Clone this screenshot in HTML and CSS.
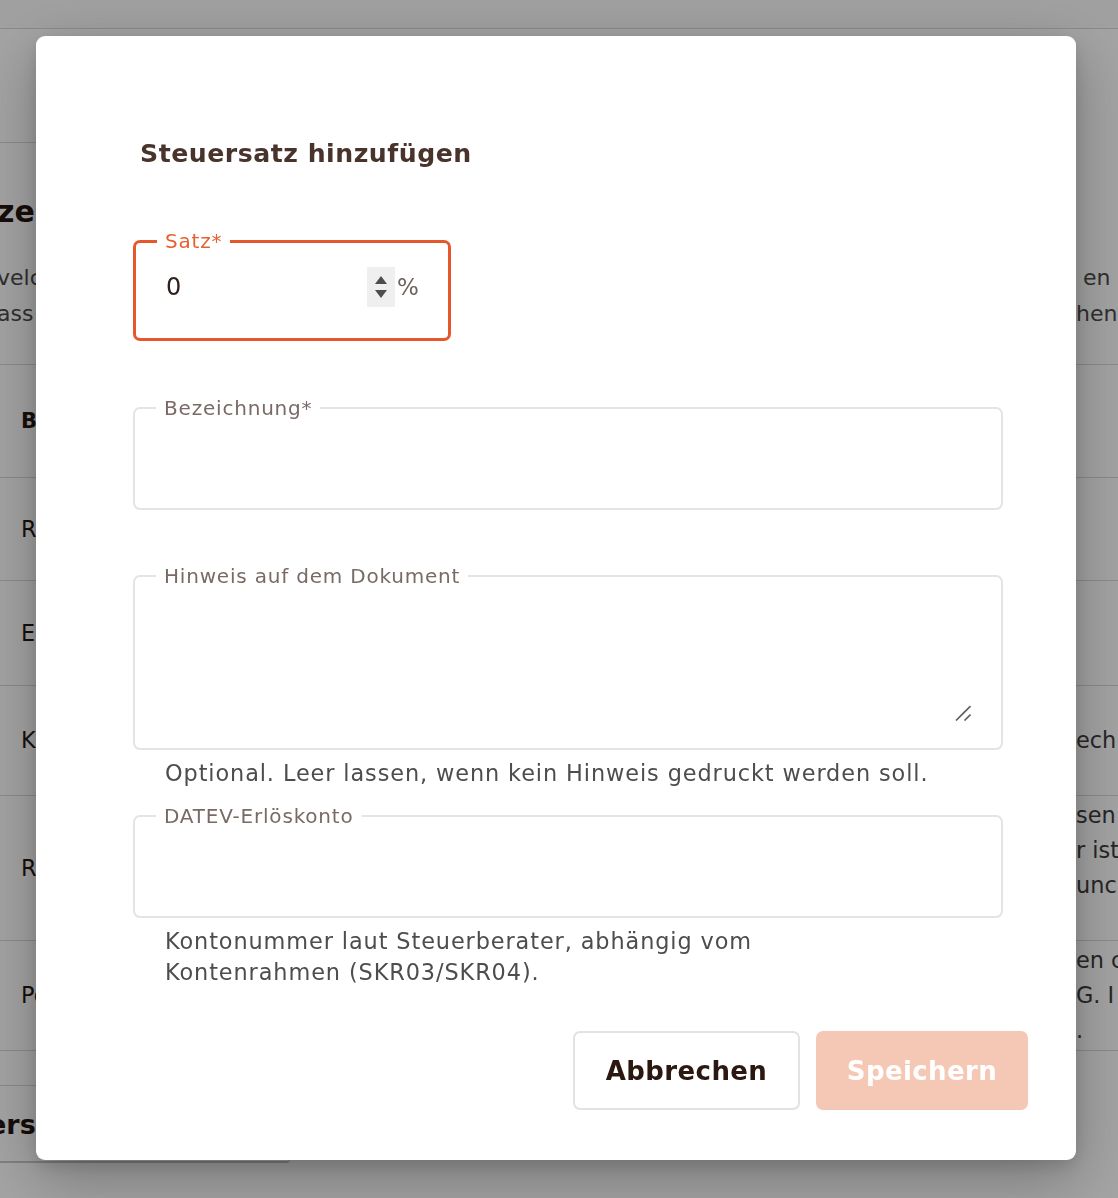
FILE: index.html
```html
<!DOCTYPE html>
<html lang="de">
<head>
<meta charset="utf-8">
<title>Steuersatz hinzufügen</title>
<link rel="stylesheet" href="styles.css">
</head>
<body>
<div class="page">
  <div class="topbar"></div>
  <div class="subbar"></div>
  <div class="row heading-row"><span class="l heading">zen</span></div>
  <div class="row para-row">
    <span class="l para">velche<br>ass</span>
    <span class="r para">&nbsp;en<br>hen</span>
  </div>
  <div class="table">
    <div class="trow th"><span class="l cell bold">Bezeichnung</span></div>
    <div class="trow r1"><span class="l cell">Regelsteuersatz</span></div>
    <div class="trow r2"><span class="l cell">Ermäßigt</span></div>
    <div class="trow r3"><span class="l cell">Kleinunternehmer</span><span class="r cell">ech</span></div>
    <div class="trow r4"><span class="l cell">Reverse Charge</span><span class="r cell top">sen<br>r ist<br>unc</span></div>
    <div class="trow r5"><span class="l cell">Portal</span><span class="r cell">en c<br>G. I<br>.</span></div>
  </div>
  <div class="section">
    <span class="l heading2">ers</span>
  </div>
  <div class="card-edge"></div>
</div>

<div class="overlay">
  <div class="modal" role="dialog" aria-labelledby="dlg-title">
    <h2 class="title" id="dlg-title">Steuersatz hinzufügen</h2>

    <fieldset class="field field-rate">
      <legend>Satz*</legend>
      <div class="rate-row">
        <input class="rate-input" type="text" value="0">
        <div class="spinner">
          <span class="tri up"></span>
          <span class="tri down"></span>
        </div>
        <span class="unit">%</span>
      </div>
    </fieldset>

    <fieldset class="field field-text">
      <legend>Bezeichnung*</legend>
      <input class="text-input" type="text">
    </fieldset>

    <fieldset class="field field-area">
      <legend>Hinweis auf dem Dokument</legend>
      <div class="area-wrap">
        <textarea class="area"></textarea>
        <svg class="grip" width="16" height="16" viewBox="0 0 16 16" aria-hidden="true">
          <path d="M1 15.5 L15.5 1 M9.5 15.5 L15.5 9.5" stroke="#5f5f5f" stroke-width="1.6" fill="none"/>
        </svg>
      </div>
    </fieldset>
    <p class="helper">Optional. Leer lassen, wenn kein Hinweis gedruckt werden soll.</p>

    <fieldset class="field field-text field-datev">
      <legend>DATEV-Erlöskonto</legend>
      <input class="text-input" type="text">
    </fieldset>
    <p class="helper helper-2">Kontonummer laut Steuerberater, abhängig vom Kontenrahmen (SKR03/SKR04).</p>

    <div class="actions">
      <button class="btn btn-cancel" type="button">Abbrechen</button>
      <button class="btn btn-save" type="button">Speichern</button>
    </div>
  </div>
</div>
</body>
</html>
```
FILE: styles.css
```css
* { box-sizing: border-box; }

html, body {
  margin: 0;
  padding: 0;
}

body {
  width: 1118px;
  height: 1198px;
  overflow: hidden;
  background: #ffffff;
  font-family: "DejaVu Sans", Inter, "Liberation Sans", sans-serif;
  color: #2a1c18;
}

/* ---------- background page ---------- */
.page {
  width: 1118px;
  height: 1198px;
  overflow: hidden;
}

.topbar {
  height: 29px;
  border-bottom: 1px solid #d8d8d8;
  background: #fbfbfb;
}

.subbar {
  height: 114px;
  width: 600px;
  border-bottom: 1px solid #d8d8d8;
}

.row {
  display: flex;
  justify-content: space-between;
  white-space: nowrap;
}

.l { margin-left: -3px; }
.r { width: 42px; overflow: hidden; }

.heading-row { margin-top: 49px; }
.heading {
  font-size: 30px;
  line-height: 40px;
  font-weight: 700;
  color: #24140f;
}

.para-row { margin-top: 28px; }
.para {
  font-size: 22px;
  line-height: 36px;
  color: #4a4a4a;
}

.table {
  margin-top: 32px;
  border-top: 1px solid #d8d8d8;
}

.trow {
  display: flex;
  justify-content: space-between;
  align-items: center;
  border-bottom: 1px solid #d8d8d8;
  white-space: nowrap;
}

.th { height: 113px; }
.r1 { height: 103px; }
.r2 { height: 105px; }
.r3 { height: 110px; }
.r4 { height: 145px; }
.r5 { height: 110px; }

.cell {
  font-size: 22.4px;
  line-height: 35px;
  color: #261712;
}
.trow .l { margin-left: 21px; }
.trow .r { color: #3c3c3c; }
.cell.top { align-self: flex-start; padding-top: 2px; }
.bold { font-weight: 700; font-size: 21px; }

.section {
  margin-top: 34px;
  width: 600px;
  border-top: 1px solid #d8d8d8;
  padding-top: 19px;
  display: flex;
}
.heading2 {
  margin-left: -12px;
  font-size: 27px;
  line-height: 40px;
  font-weight: 700;
  color: #24140f;
}

.card-edge {
  margin-top: 14px;
  width: 290px;
  height: 4px;
  border-bottom: 2px solid #c8c8c8;
  border-bottom-right-radius: 6px;
}

/* ---------- overlay & modal ---------- */
.overlay {
  position: fixed;
  inset: 0;
  background: rgba(0, 0, 0, 0.36);
  display: flex;
  align-items: flex-start;
  padding: 36px 0 0 36px;
}

.modal {
  width: 1040px;
  height: 1124px;
  background: #ffffff;
  border-radius: 9px;
  box-shadow: 0 18px 60px rgba(0, 0, 0, 0.28), 0 6px 16px rgba(0, 0, 0, 0.12);
  padding: 102px 48px 0 97px;
  display: flex;
  flex-direction: column;
  align-items: flex-start;
}

.title {
  margin: 0 0 0 7px;
  font-size: 25.2px;
  line-height: 32px;
  font-weight: 700;
  letter-spacing: 0.5px;
  color: #49342d;
}

/* ---------- fields ---------- */
.field {
  margin: 0;
  min-width: 0;
  padding: 0 0 0 21px;
  border: 2px solid #e4e4e4;
  border-radius: 7px;
  width: 870px;
}

.field legend {
  padding: 0 8px;
  font-size: 20px;
  line-height: 22px;
  letter-spacing: 0.8px;
  color: #7a6a65;
}

.field-rate {
  margin-top: 60px;
  width: 318px;
  border: 3px solid #e6582b;
}
.field-rate legend { color: #e85f30; }

.rate-row {
  height: 86px;
  padding-bottom: 16px;
  display: flex;
  align-items: center;
}

.rate-input {
  border: 0;
  outline: 0;
  padding: 0 0 0 9px;
  margin: 0;
  width: 210px;
  height: 40px;
  font-family: inherit;
  font-size: 24px;
  color: #2e201b;
  background: transparent;
}

.spinner {
  width: 28px;
  height: 40px;
  background: #efefef;
  display: flex;
  flex-direction: column;
  align-items: center;
  justify-content: center;
  gap: 6px;
}

.tri {
  width: 0;
  height: 0;
  border-left: 6.5px solid transparent;
  border-right: 6.5px solid transparent;
}
.tri.up { border-bottom: 8px solid #4d4d4d; }
.tri.down { border-top: 8px solid #4d4d4d; }

.unit {
  margin-left: 2px;
  font-size: 23px;
  color: #6f625e;
}

.field-text {
  margin-top: 56px;
}
.field-text .text-input {
  display: block;
  border: 0;
  outline: 0;
  margin: 0;
  padding: 0 0 0 9px;
  width: 100%;
  height: 89px;
  font-family: inherit;
  font-size: 22.4px;
  background: transparent;
}

.field-area {
  margin-top: 55px;
  height: 185px;
}
.area-wrap {
  display: flex;
  align-items: flex-end;
  margin: 13px 30px 0 9px;
  height: 121px;
}
.area {
  flex: 1;
  height: 100%;
  border: 0;
  outline: 0;
  padding: 0;
  resize: none;
  font-family: inherit;
  font-size: 22.4px;
  background: transparent;
}
.grip {
  display: block;
  flex: none;
}

.helper {
  margin: 8px 0 0 32px;
  max-width: 778px;
  font-size: 22.4px;
  line-height: 31px;
  letter-spacing: 0.9px;
  color: #4d4d4d;
}

.helper-2 { max-width: 700px; }

.field-datev { margin-top: 16px; }

/* ---------- actions ---------- */
.actions {
  margin-top: 43px;
  align-self: stretch;
  display: flex;
  justify-content: flex-end;
  gap: 16px;
}

.btn {
  height: 79px;
  border-radius: 7px;
  font-family: inherit;
  font-size: 26px;
  font-weight: 700;
  letter-spacing: 0.4px;
  cursor: pointer;
}

.btn-cancel {
  width: 227px;
  background: #ffffff;
  border: 2px solid #e2e2e2;
  color: #2b1811;
}

.btn-save {
  width: 212px;
  background: #f5c8b6;
  border: 0;
  color: #ffffff;
}
```
